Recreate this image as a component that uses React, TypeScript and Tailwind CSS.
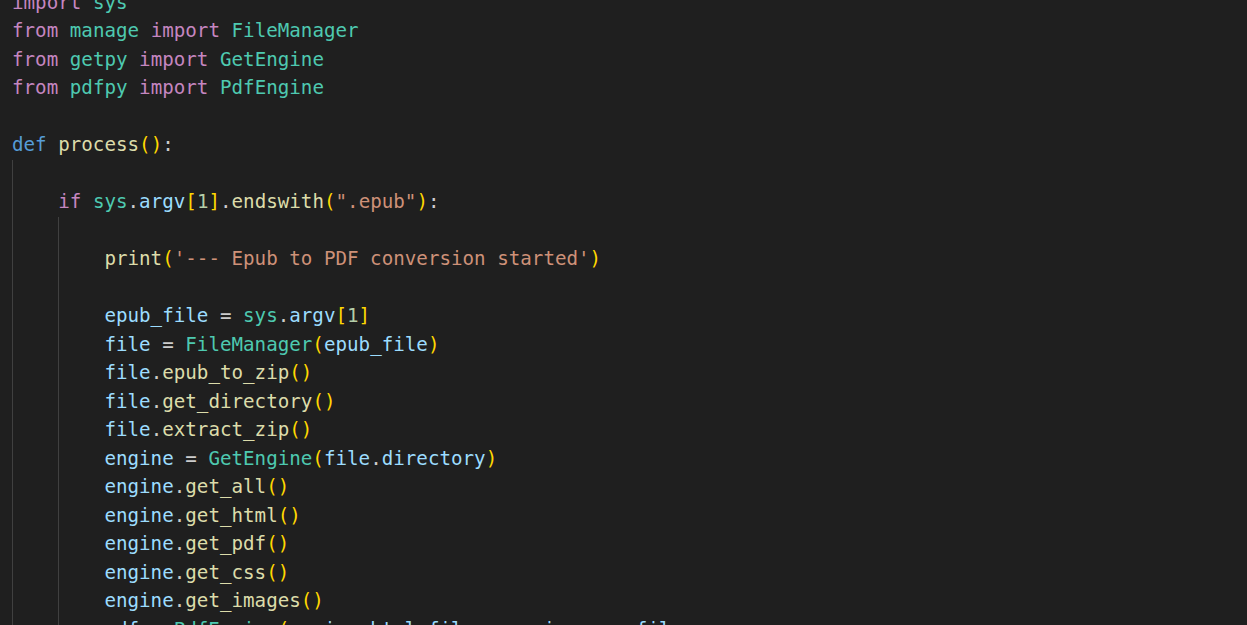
type Tok = [string, string];

const kw = 'text-[#c586c0]';
const def = 'text-[#569cd6]';
const cls = 'text-[#4ec9b0]';
const fn = 'text-[#dcdcaa]';
const v = 'text-[#9cdcfe]';
const str = 'text-[#ce9178]';
const num = 'text-[#b5cea8]';
const br = 'text-[#ffd700]';
const p = 'text-[#cccccc]';

const lines: { indent: number; toks: Tok[] }[] = [
  { indent: 0, toks: [['import', kw], [' ', p], ['sys', cls]] },
  { indent: 0, toks: [['from', kw], [' ', p], ['manage', cls], [' ', p], ['import', kw], [' ', p], ['FileManager', cls]] },
  { indent: 0, toks: [['from', kw], [' ', p], ['getpy', cls], [' ', p], ['import', kw], [' ', p], ['GetEngine', cls]] },
  { indent: 0, toks: [['from', kw], [' ', p], ['pdfpy', cls], [' ', p], ['import', kw], [' ', p], ['PdfEngine', cls]] },
  { indent: 0, toks: [] },
  { indent: 0, toks: [['def', def], [' ', p], ['process', fn], ['()', br], [':', p]] },
  { indent: 1, toks: [] },
  { indent: 1, toks: [['if', kw], [' ', p], ['sys', cls], ['.', p], ['argv', v], ['[', br], ['1', num], [']', br], ['.', p], ['endswith', fn], ['(', br], ['".epub"', str], [')', br], [':', p]] },
  { indent: 2, toks: [] },
  { indent: 2, toks: [['print', fn], ['(', br], ["'--- Epub to PDF conversion started'", str], [')', br]] },
  { indent: 2, toks: [] },
  { indent: 2, toks: [['epub_file', v], [' = ', p], ['sys', cls], ['.', p], ['argv', v], ['[', br], ['1', num], [']', br]] },
  { indent: 2, toks: [['file', v], [' = ', p], ['FileManager', cls], ['(', br], ['epub_file', v], [')', br]] },
  { indent: 2, toks: [['file', v], ['.', p], ['epub_to_zip', fn], ['()', br]] },
  { indent: 2, toks: [['file', v], ['.', p], ['get_directory', fn], ['()', br]] },
  { indent: 2, toks: [['file', v], ['.', p], ['extract_zip', fn], ['()', br]] },
  { indent: 2, toks: [['engine', v], [' = ', p], ['GetEngine', cls], ['(', br], ['file', v], ['.', p], ['directory', v], [')', br]] },
  { indent: 2, toks: [['engine', v], ['.', p], ['get_all', fn], ['()', br]] },
  { indent: 2, toks: [['engine', v], ['.', p], ['get_html', fn], ['()', br]] },
  { indent: 2, toks: [['engine', v], ['.', p], ['get_pdf', fn], ['()', br]] },
  { indent: 2, toks: [['engine', v], ['.', p], ['get_css', fn], ['()', br]] },
  { indent: 2, toks: [['engine', v], ['.', p], ['get_images', fn], ['()', br]] },
  { indent: 2, toks: [['pdf', v], [' = ', p], ['PdfEngine', cls], ['(', br], ['engine', v], ['.', p], ['html_files', v], [', ', p], ['engine', v], ['.', p], ['css_file', v]] },
];

export default function App() {
  return (
    <div className="h-screen w-full overflow-hidden bg-[#1f1f1f]">
      <div className="-mt-[11.5px] pl-[12px] font-['DejaVu_Sans_Mono','Liberation_Mono',monospace] text-[19.2px] leading-[28.5px]">
        {lines.map((ln, i) => (
          <div key={i} className="flex h-[28.5px] whitespace-pre">
            {Array.from({ length: ln.indent }).map((_, j) => (
              <span key={j} className="w-[4ch] shrink-0 border-l border-[#404040]" />
            ))}
            <span>
              {ln.toks.map(([t, c], k) => (
                <span key={k} className={c}>
                  {t}
                </span>
              ))}
            </span>
          </div>
        ))}
      </div>
    </div>
  );
}
